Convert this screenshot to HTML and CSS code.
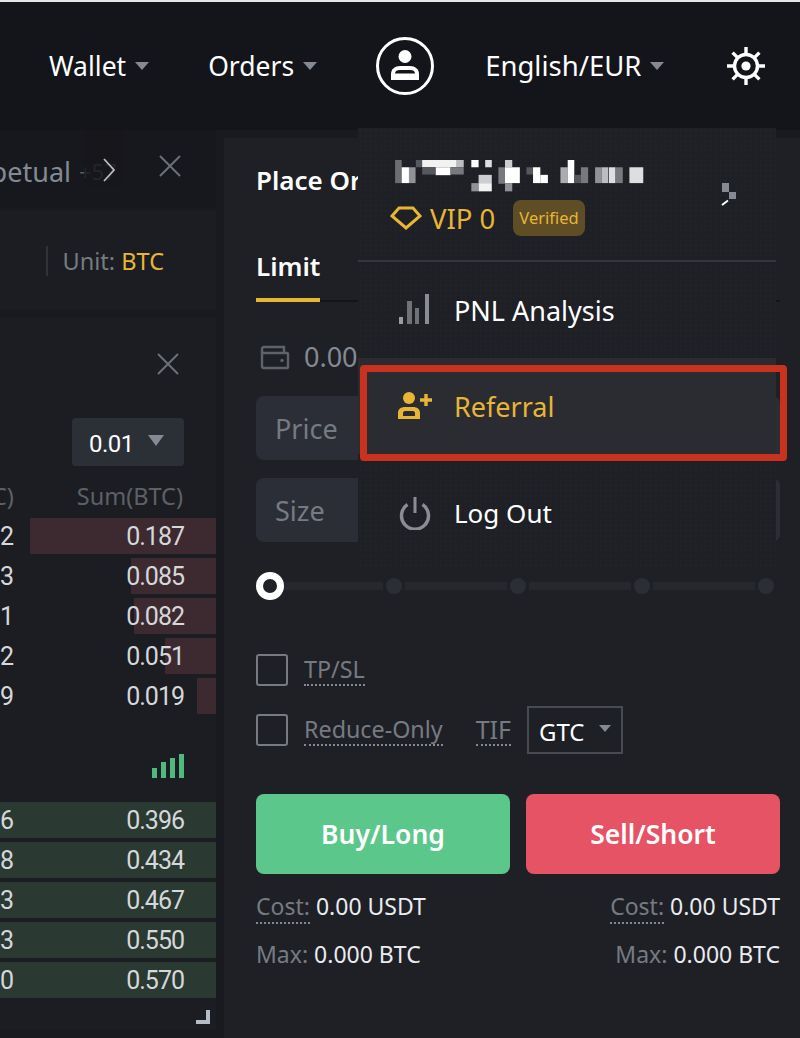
FILE: index.html
```html
<!DOCTYPE html>
<html lang="en">
<head>
<meta charset="utf-8">
<title>Trade</title>
<link rel="stylesheet" href="styles.css">
</head>
<body>
<div class="page">
  <header class="nav">
    <div class="nav-item nav-wallet">Wallet<i class="caret"></i></div>
    <div class="nav-item nav-orders">Orders<i class="caret"></i></div>
    <svg class="avatar" viewBox="0 0 60 60" width="60" height="60"><circle cx="30" cy="30" r="27.500" fill="none" stroke="#fff" stroke-width="3"/><circle cx="30" cy="20.500" r="6.500" fill="#fff"/><path d="M16 44v-6c0-5 4-8 9-8h10c5 0 9 3 9 8v6z" fill="#fff"/><path d="M20 37.500c0-2.500 2-3.500 5-3.500h10c3 0 5 1 5 3.500z" fill="#14151a"/></svg>
    <div class="nav-item nav-lang">English/EUR<i class="caret"></i></div>
    <svg class="gear" viewBox="0 0 40 40" width="40" height="40"><g stroke="#fff" stroke-width="3.400"><path d="M20 1v7M20 32v7M1 20h7M32 20h7M6.600 6.600l5 5M28.400 28.400l5 5M33.400 6.600l-5 5M11.600 28.400l-5 5"/></g><circle cx="20" cy="20" r="11.500" fill="#14151a" stroke="#fff" stroke-width="3.400"/><circle cx="20" cy="20" r="4.600" fill="#fff"/></svg>
  </header>

  <div class="main">
    <section class="left">
      <div class="tabs">
        <div class="tab-name"><span>Perpetual</span></div>
        <span class="tab-more">+57</span>
        <i class="tab-fade"></i>
        <svg class="tab-arrow" viewBox="0 0 14 24" width="14" height="24"><path d="M2 1l10 11L2 23" fill="none" stroke="#b7bdc6" stroke-width="1.800"/></svg>
        <svg class="close tab-close" viewBox="0 0 22 22" width="22" height="22"><path d="M1 1l20 20M21 1L1 21" stroke="#6c7078" stroke-width="2"/></svg>
      </div>
      <div class="unit-bar"><span class="unit">Unit: <b>BTC</b></span></div>
      <div class="book">
        <div class="book-top">
          <svg class="close" viewBox="0 0 22 22" width="22" height="22"><path d="M1 1l20 20M21 1L1 21" stroke="#6c7078" stroke-width="2"/></svg>
        </div>
        <div class="depth-row"><div class="depth"><span class="depth-num">0.01</span><i class="caret caret-big"></i></div></div>
        <div class="book-head"><span class="head-cut">C)</span><span>Sum(BTC)</span></div>
        <div class="rows">
          <div class="row"><i class="bar ask" style="width:186px"></i><span>2</span><span>0.187</span></div>
          <div class="row"><i class="bar ask" style="width:85px"></i><span>3</span><span>0.085</span></div>
          <div class="row"><i class="bar ask" style="width:82px"></i><span>1</span><span>0.082</span></div>
          <div class="row"><i class="bar ask" style="width:51px"></i><span>2</span><span>0.051</span></div>
          <div class="row"><i class="bar ask" style="width:19px"></i><span>9</span><span>0.019</span></div>
        </div>
        <div class="signal-row">
          <div class="signal"><i class="s1"></i><i class="s2"></i><i class="s3"></i><i class="s4"></i></div>
        </div>
        <div class="rows rows-bid">
          <div class="row"><i class="bar bid"></i><span>6</span><span>0.396</span></div>
          <div class="row"><i class="bar bid"></i><span>8</span><span>0.434</span></div>
          <div class="row"><i class="bar bid"></i><span>3</span><span>0.467</span></div>
          <div class="row"><i class="bar bid"></i><span>3</span><span>0.550</span></div>
          <div class="row"><i class="bar bid"></i><span>0</span><span>0.570</span></div>
        </div>
        <div class="resize-row"><i class="resize"></i></div>
      </div>
    </section>

    <section class="order">
      <h2 class="order-title">Place Order</h2>
      <div class="order-tabs"><span class="tab-active">Limit</span></div>
      <div class="balance">
        <svg viewBox="0 0 30 26" width="30" height="26"><path d="M2 7v15a2 2 0 0 0 2 2h23a1 1 0 0 0 1-1V10a1 1 0 0 0-1-1H4a2 2 0 0 1-2-2V5a2 2 0 0 1 2-2h20v6" fill="none" stroke="#5e6369" stroke-width="2.400"/><circle cx="22" cy="16.500" r="1.700" fill="#5e6369"/></svg>
        <span class="balance-num">0.00</span>
      </div>
      <div class="field">Price</div>
      <div class="field field-size">Size</div>
      <div class="slider">
        <i class="knob"></i>
        <i class="seg"></i><i class="dot"></i>
        <i class="seg"></i><i class="dot"></i>
        <i class="seg"></i><i class="dot"></i>
        <i class="seg"></i><i class="dot"></i>
      </div>
      <div class="opt opt-first"><i class="check"></i><span class="dotted">TP/SL</span></div>
      <div class="opt opt-second">
        <i class="check"></i><span class="dotted">Reduce-Only</span>
        <span class="dotted tif">TIF</span>
        <div class="gtc">GTC<i class="caret"></i></div>
      </div>
      <div class="actions">
        <div class="btn buy">Buy/Long</div>
        <div class="btn sell">Sell/Short</div>
      </div>
      <div class="info">
        <div><span class="dotted">Cost:</span> <b>0.00 USDT</b></div>
        <div><span class="dotted">Cost:</span> <b>0.00 USDT</b></div>
      </div>
      <div class="info info-max">
        <div><span class="muted">Max:</span> <b>0.000 BTC</b></div>
        <div><span class="muted">Max:</span> <b>0.000 BTC</b></div>
      </div>
    </section>
  </div>

  <aside class="menu">
    <div class="menu-user">
      <svg class="pixels" viewBox="102 480 760 100" width="253" height="33">
        <rect x="102" y="480" width="20" height="70" fill="#6a6d72"/><rect x="122" y="502" width="22" height="48" fill="#fff"/><rect x="144" y="502" width="20" height="48" fill="#8f9296"/><rect x="165" y="480" width="20" height="22" fill="#55585d"/><rect x="184" y="480" width="105" height="22" fill="#f2f2f2"/><rect x="288" y="480" width="22" height="22" fill="#bbbdc0"/><rect x="184" y="502" width="40" height="22" fill="#55585d"/><rect x="225" y="502" width="45" height="24" fill="#fff"/><rect x="270" y="502" width="40" height="22" fill="#77797e"/><rect x="333" y="480" width="22" height="22" fill="#fff"/><rect x="375" y="480" width="20" height="22" fill="#dddee0"/><rect x="355" y="525" width="40" height="25" fill="#cccdd0"/><rect x="333" y="550" width="22" height="25" fill="#8f9296"/><rect x="355" y="550" width="40" height="25" fill="#f2f2f2"/><rect x="415" y="502" width="20" height="50" fill="#77797e"/><rect x="435" y="480" width="22" height="22" fill="#cccdd0"/><rect x="435" y="502" width="45" height="48" fill="#fff"/><rect x="435" y="550" width="22" height="25" fill="#8f9296"/><rect x="500" y="502" width="20" height="22" fill="#55585d"/><rect x="520" y="502" width="22" height="48" fill="#fff"/><rect x="542" y="525" width="23" height="25" fill="#fff"/><rect x="603" y="502" width="22" height="48" fill="#aaacaf"/><rect x="625" y="480" width="20" height="70" fill="#fff"/><rect x="645" y="525" width="20" height="25" fill="#55585d"/><rect x="665" y="502" width="22" height="48" fill="#77797e"/><rect x="708" y="502" width="20" height="48" fill="#8f9296"/><rect x="728" y="502" width="20" height="48" fill="#bbbdc0"/><rect x="750" y="502" width="20" height="48" fill="#dddee0"/><rect x="770" y="502" width="22" height="48" fill="#77797e"/><rect x="812" y="502" width="42" height="48" fill="#dddee0"/>
      </svg>
      <div class="vip">
        <svg viewBox="0 0 32 24" width="32" height="24"><path d="M9 2h14l7 8-14 12L2 10z" fill="none" stroke="#e8b535" stroke-width="3"/></svg>
        <span class="vip-text">VIP 0</span>
        <span class="badge">Verified</span>
      </div>
      <svg class="copy-mark" viewBox="0 0 16 23" width="16" height="23"><rect x="1" y="0" width="7" height="9" fill="#868a93"/><rect x="8" y="9" width="7" height="7" fill="#868a93"/><path d="M1 22l6-4.500" stroke="#fff" stroke-width="2"/></svg>
    </div>
    <div class="menu-item">
      <svg class="menu-icon" viewBox="0 0 38 34" width="38" height="34"><rect x="3" y="24" width="4" height="7" fill="#9a9c9f"/><rect x="11" y="8" width="5" height="23" fill="#6f7277"/><rect x="19" y="15" width="4" height="16" fill="#6f7277"/><rect x="29" y="1" width="4" height="30" fill="#8a8d93"/></svg>
      <span>PNL Analysis</span>
    </div>
    <div class="menu-item menu-active">
      <svg class="menu-icon" viewBox="0 0 38 34" width="38" height="34"><circle cx="13" cy="9" r="6" fill="#e8b535"/><path d="M2 30v-6c0-4 3-6 7-6h8c4 0 7 2 7 6v6zM7 27h12v-3c0-1-1-2-2-2H9c-1 0-2 1-2 2z" fill="#e8b535" fill-rule="evenodd"/><path d="M30 5v12M24 11h12" stroke="#e8b535" stroke-width="3.400"/></svg>
      <span>Referral</span>
    </div>
    <div class="menu-item menu-logout">
      <svg class="menu-icon" viewBox="0 0 38 34" width="38" height="34"><path d="M11.500 8.500a13.500 13.500 0 1 0 15 0" fill="none" stroke="#8a8d93" stroke-width="3.400"/><path d="M19 1v16" stroke="#8a8d93" stroke-width="3"/></svg>
      <span>Log Out</span>
    </div>
  </aside>
  <div class="highlight"></div>
</div>
</body>
</html>
```

FILE: styles.css
```css
* { box-sizing: border-box; }
html, body { margin: 0; padding: 0; }
body { background: #14151a; font-family: "Noto Sans", Roboto, sans-serif; color: #fff; }
i { display: block; }
.page { position: relative; width: 800px; height: 1038px; overflow: hidden; background: #14151a; border-top: 2px solid #e6e6e6; }

.nav { height: 128px; display: flex; align-items: center; padding: 0 34px 0 49px; }
.nav-item { display: flex; align-items: center; font-size: 26.500px; line-height: 36px; color: #fff; }
.caret { width: 0; height: 0; margin-left: 9px; border-left: 7px solid transparent; border-right: 7px solid transparent; border-top: 8px solid #848a93; }
.nav-orders { margin-left: 59px; }
.avatar { margin-left: 58px; }
.nav-lang { margin-left: 50px; font-size: 27.500px; }
.gear { margin-left: auto; }

.main { height: 908px; display: flex; background: #191a1f; }
.left { width: 216px; display: flex; flex-direction: column; }
.tabs { position: relative; height: 78px; display: flex; align-items: center; background: #17181d; padding-top: 4px; font-size: 27px; color: #848a93; }
.tab-name { width: 71px; display: flex; justify-content: flex-end; overflow: hidden; white-space: nowrap; }
.tab-more { margin-left: 8px; font-size: 22px; color: #5a5f66; }
.tab-fade { position: absolute; left: 84px; top: 0; width: 40px; height: 56px; background: #16171b; opacity: .8; }
.tab-arrow { position: absolute; left: 102px; top: 28px; }
.tab-close { position: absolute; left: 159px; top: 25px; }

.unit-bar { height: 100px; margin-top: 2px; padding-top: 2px; display: flex; align-items: center; justify-content: flex-end; background: #1b1d22; padding-right: 52px; }
.unit { font-size: 23.500px; line-height: 30px; color: #767b82; border-left: 2px solid #2f3237; padding-left: 15px; }
.unit b { font-weight: 400; color: #e8b535; }
.book { margin-top: 8px; height: 712px; background: #1b1d22; }
.book-top { display: flex; justify-content: flex-end; padding: 35px 37px 0 0; }
.depth-row { display: flex; justify-content: flex-end; padding-right: 32px; margin-top: 43px; }
.depth { display: flex; align-items: center; justify-content: space-between; width: 112px; height: 48px; background: #2b2f36; border-radius: 4px; padding: 0 20px 0 17px; font-family: Roboto, sans-serif; font-size: 24px; letter-spacing: -.5px; color: #fff; }
.depth-num { padding-top: 3px; }
.caret-big { border-left-width: 8px; border-right-width: 8px; border-top-width: 11px; margin-bottom: 4px; }
.book-head { display: flex; justify-content: space-between; padding-right: 33px; margin-top: 14px; font-size: 23.500px; line-height: 32px; color: #5d6167; }
.head-cut { margin-left: -8px; }
.rows { display: flex; flex-direction: column; gap: 4px; margin-top: 6px; }
.rows-bid { margin-top: 24px; }
.row { position: relative; height: 36px; display: flex; justify-content: space-between; align-items: center; padding-right: 32px; font-family: Roboto, sans-serif; font-size: 25px; letter-spacing: -1px; color: #d5d7da; }
.row span { position: relative; }
.bar { position: absolute; right: 0; top: 0; bottom: 0; }
.ask { background: #3d2a31; }
.bid { left: 0; background: #2a3932; }
.signal-row { display: flex; justify-content: flex-end; padding-right: 32px; margin-top: 40px; height: 24px; }
.signal { display: flex; align-items: flex-end; gap: 4px; }
.signal i { width: 5px; background: #4fb97e; }
.s1 { height: 10px; }
.s2 { height: 16px; }
.s3 { height: 20px; }
.s4 { height: 24px; }
.resize-row { display: flex; justify-content: flex-end; padding-right: 6px; margin-top: 12px; }
.resize { width: 14px; height: 14px; border-right: 4px solid #b7bdc6; border-bottom: 4px solid #b7bdc6; }

.order { margin-left: 8px; margin-top: 8px; width: 576px; background: #1e2026; padding: 24px 20px 0 32px; }
.order-title { margin: 0; font-size: 26px; line-height: 36px; font-weight: 600; }
.order-tabs { margin-top: 50px; height: 54px; border-bottom: 2px solid #14151a; }
.tab-active { display: inline-block; width: 64px; height: 54px; border-bottom: 4px solid #e8b535; font-size: 26px; font-weight: 600; line-height: 36px; }
.balance { display: flex; align-items: center; gap: 14px; margin-top: 37px; height: 36px; padding-left: 4px; color: #848a93; }
.balance-num { font-size: 27px; line-height: 36px; }
.field { height: 64px; margin-top: 21px; background: #2b2e36; border-radius: 8px; padding-left: 19px; display: flex; align-items: center; font-size: 27px; color: #767b82; }
.field-size { margin-top: 18px; }
.slider { display: flex; align-items: center; margin-top: 30px; height: 28px; padding: 0 6px; }
.knob { position: relative; width: 28px; height: 28px; margin: 0 -6px; border-radius: 50%; background: #1e2026; border: 7px solid #fff; }
.seg { flex: 1; height: 8px; background: #26282e; margin: 0 3px; }
.dot { width: 16px; height: 16px; border-radius: 50%; background: #2b2e35; }
.opt { display: flex; align-items: center; font-size: 23.300px; color: #767b82; }
.opt-first { margin-top: 54px; height: 32px; }
.opt-second { margin-top: 20px; height: 48px; }
.check { width: 32px; height: 32px; border: 2px solid #767b82; border-radius: 3px; margin-right: 16px; }
.dotted { border-bottom: 2px dotted #848a93; line-height: 30px; color: #767b82; }
.tif { margin-left: 33px; font-size: 25px; }
.gtc { display: flex; align-items: center; justify-content: space-between; margin-left: 16px; width: 96px; height: 48px; border: 2px solid #474b52; padding: 2px 10px 0 10px; color: #fff; font-size: 24px; }
.gtc .caret { border-left-width: 6px; border-right-width: 6px; border-top-width: 7px; margin-bottom: 6px; }
.actions { display: flex; gap: 16px; margin-top: 40px; }
.btn { flex: 1; height: 80px; border-radius: 8px; display: flex; align-items: center; justify-content: center; font-size: 26.500px; font-weight: 600; }
.buy { background: #5cc78a; }
.sell { background: #e55364; }
.info { display: flex; justify-content: space-between; margin-top: 16px; font-size: 23px; line-height: 32px; }
.info b { font-weight: 400; color: #eaecef; }
.muted { color: #767b82; }

.menu { position: absolute; left: 358px; top: 126px; width: 418px; height: 438px; background: #1e2026 radial-gradient(#222429 1px, transparent 1px) 0 0 / 5px 5px; display: flex; flex-direction: column; }
.menu-user { position: relative; height: 134px; padding: 32px 0 0 32px; border-bottom: 2px solid #33363c; }
.pixels { display: block; margin-left: 4px; }
.vip { display: flex; align-items: center; height: 36px; margin-top: 7px; }
.vip-text { margin-left: 8px; font-size: 27.500px; color: #e8b535; }
.badge { margin-left: 18px; padding: 0 6px; height: 36px; line-height: 36px; background: #5f4d26; color: #e8b535; border-radius: 8px; font-size: 16.500px; }
.copy-mark { position: absolute; left: 363px; top: 55px; }
.menu-item { height: 96px; display: flex; align-items: center; padding-left: 38px; font-size: 27px; color: #fff; }
.menu-icon { margin-right: 20px; }
.menu-active { background: #2b2c32; color: #e8b535; }
.menu-logout { margin-top: 8px; height: 102px; font-size: 26px; }
.highlight { position: absolute; left: 360px; top: 363px; width: 427px; height: 96px; border: 7px solid #c9321f; border-radius: 4px; }
```
